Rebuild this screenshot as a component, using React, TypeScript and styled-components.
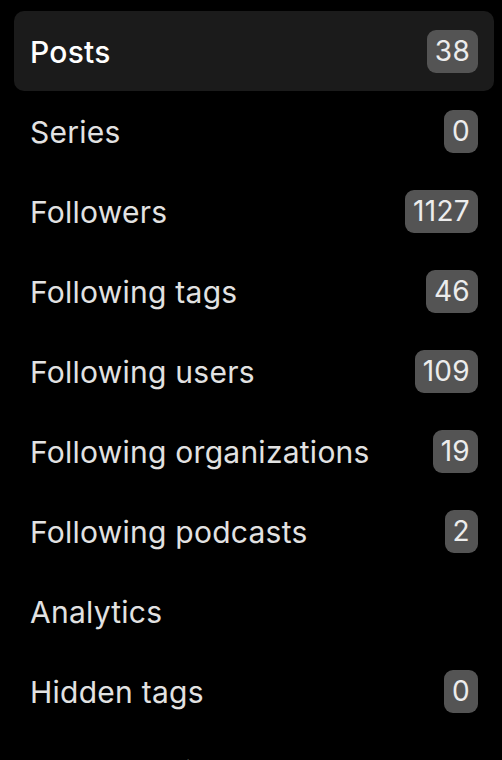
import React, { FC } from "react";
import styled, { createGlobalStyle } from "styled-components";

const GlobalStyle = createGlobalStyle`
  html, body {
    margin: 0;
    padding: 0;
    background: #000;
  }
  body {
    font-family: Inter, "Noto Sans", "DejaVu Sans", sans-serif;
    -webkit-font-smoothing: antialiased;
  }
`;

type NavItem = {
  label: string;
  count?: number;
};

const items: NavItem[] = [
  { label: "Posts", count: 38 },
  { label: "Series", count: 0 },
  { label: "Followers", count: 1127 },
  { label: "Following tags", count: 46 },
  { label: "Following users", count: 109 },
  { label: "Following organizations", count: 19 },
  { label: "Following podcasts", count: 2 },
  { label: "Analytics" },
  { label: "Hidden tags", count: 0 },
  { label: "Upload a video" },
];

const Sidebar = styled.nav`
  display: flex;
  flex-direction: column;
  padding: 11px 8px 0 14px;
  height: 760px;
  overflow: hidden;
  box-sizing: border-box;
`;

interface ItemProps {
  $active?: boolean;
}

const Item = styled.a<ItemProps>`
  display: flex;
  align-items: center;
  justify-content: space-between;
  flex-shrink: 0;
  height: 80px;
  padding: 1px 16px 0 16px;
  box-sizing: border-box;
  border-radius: 10px;
  background: ${(props) => (props.$active ? "#1b1b1b" : "transparent")};
  color: ${(props) => (props.$active ? "#ffffff" : "#e2e2e2")};
  font-size: 30px;
  font-weight: ${(props) => (props.$active ? 500 : 400)};
  letter-spacing: 0.25px;
  text-decoration: none;
`;

const Label = styled.span`
  white-space: nowrap;
`;

const Badge = styled.span`
  min-width: 17px;
  padding: 4px 8px;
  border-radius: 9px;
  background: #545454;
  color: #ececec;
  font-size: 28px;
  line-height: 35px;
  font-weight: 400;
  letter-spacing: 0.3px;
  text-align: center;
`;

export const App: FC = () => {
  return (
    <>
      <GlobalStyle />
      <Sidebar>
        {items.map((item, index) => {
          return (
            <Item key={item.label} $active={index === 0}>
              <Label>{item.label}</Label>
              {item.count !== undefined && <Badge>{item.count}</Badge>}
            </Item>
          );
        })}
      </Sidebar>
    </>
  );
};

export default App;
